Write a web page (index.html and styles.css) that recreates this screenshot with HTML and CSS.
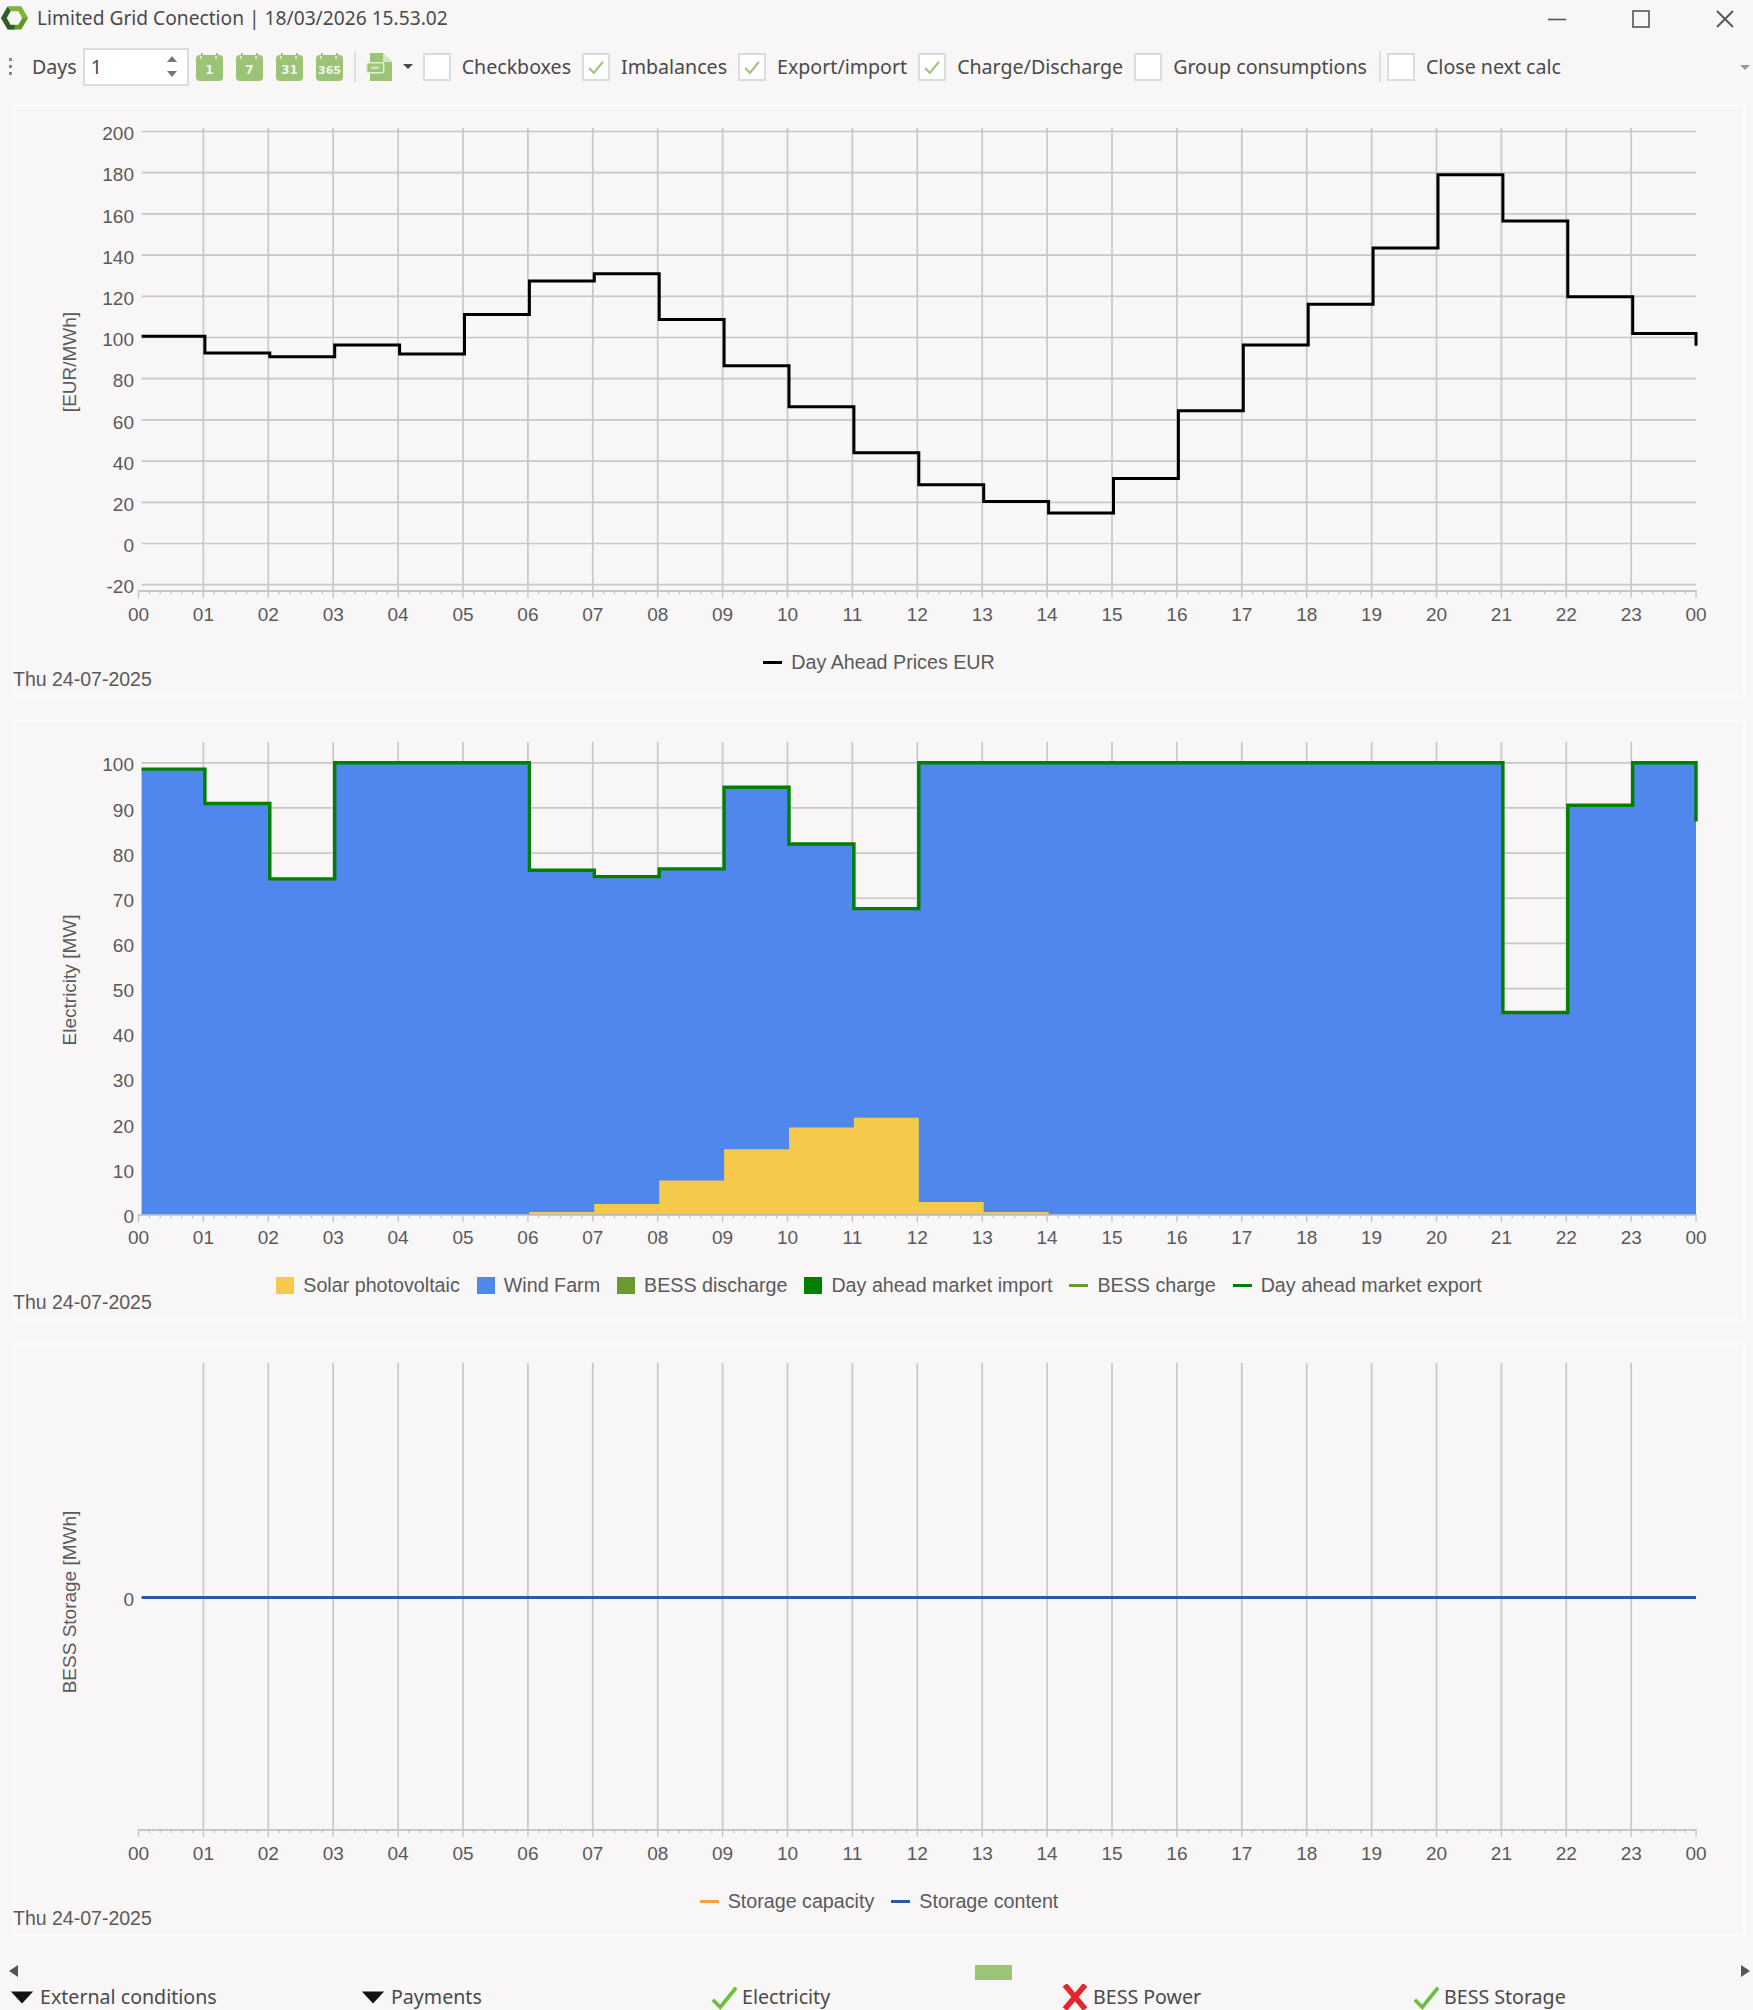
FILE: index.html
```html
<!DOCTYPE html>
<html lang="en">

<head>
    <meta charset="UTF-8">
    <meta name="viewport" content="width=device-width, initial-scale=1.0">
    <title>Limited Grid Conection</title>
    <link rel="stylesheet" href="styles.css">
</head>

<body>
    <div class="titlebar">
        <svg class="logo" viewBox="0 0 28 26">
            <polygon points="7,1 21,1 28,13 21,25 7,25 0,13" fill="#5c9a2e"/>
            <polygon points="7,1 0,13 7,25 14,25 14,20 10,20 6,13 10,6" fill="#2f5f24"/>
            <polygon points="7,1 21,1 28,13 22,13 18,6 10,6" fill="#7fb836"/>
            <polygon points="10,6 18,6 22,13 18,20 10,20 6,13" fill="#f8f6f7"/>
        </svg>
        <span class="title">Limited Grid Conection | 18/03/2026 15.53.02</span>
        <div class="window-buttons">
            <svg class="win-btn" viewBox="0 0 18 18"><path d="M0 9.5H18" stroke="#555" stroke-width="1.6"/></svg>
            <svg class="win-btn" viewBox="0 0 18 18"><rect x="1" y="1" width="16" height="16" fill="none" stroke="#555" stroke-width="1.6"/></svg>
            <svg class="win-btn" viewBox="0 0 18 18"><path d="M1 1L17 17M17 1L1 17" stroke="#555" stroke-width="1.8"/></svg>
        </div>
    </div>

    <div class="toolbar">
        <div class="grip"><i></i><i></i><i></i></div>
        <span class="days-label">Days</span>
        <div class="spinner">
            <span>1</span>
            <div class="spin-arrows"><i class="arrow-up"></i><i class="arrow-down"></i></div>
        </div>
        <div class="calendars">
            <svg class="cal" viewBox="0 0 27 28"><path d="M6 3V0M21 3V0" stroke="#9cc476" stroke-width="2"/><rect y="2" width="27" height="26" rx="4" fill="#9cc476"/><path d="M5 3V6M20 3V6" stroke="#d5e6c3" stroke-width="2"/><text x="13.5" y="21" class="cal-num">1</text></svg>
            <svg class="cal" viewBox="0 0 27 28"><path d="M6 3V0M21 3V0" stroke="#9cc476" stroke-width="2"/><rect y="2" width="27" height="26" rx="4" fill="#9cc476"/><path d="M5 3V6M20 3V6" stroke="#d5e6c3" stroke-width="2"/><text x="13.5" y="21" class="cal-num">7</text></svg>
            <svg class="cal" viewBox="0 0 27 28"><path d="M6 3V0M21 3V0" stroke="#9cc476" stroke-width="2"/><rect y="2" width="27" height="26" rx="4" fill="#9cc476"/><path d="M5 3V6M20 3V6" stroke="#d5e6c3" stroke-width="2"/><text x="13.5" y="21" class="cal-num">31</text></svg>
            <svg class="cal" viewBox="0 0 27 28"><path d="M6 3V0M21 3V0" stroke="#9cc476" stroke-width="2"/><rect y="2" width="27" height="26" rx="4" fill="#9cc476"/><path d="M5 3V6M20 3V6" stroke="#d5e6c3" stroke-width="2"/><text x="13.5" y="21" class="cal-num cal-small">365</text></svg>
        </div>
        <div class="sep sep-first"></div>
        <svg class="doc" viewBox="0 0 26 28"><path d="M4 0H17L26 9V28H4Z" fill="#9cc476"/><path d="M17 0V9H26Z" fill="#d5e6c3"/><rect x="0.7" y="9.7" width="17" height="10" rx="2" fill="#9cc476" stroke="#e3eed8" stroke-width="1.4"/><rect x="5" y="13.5" width="8" height="2.5" fill="#cfe2bb"/></svg>
        <i class="caret"></i>
        <label class="check"><span class="box"></span>Checkboxes</label>
        <label class="check"><span class="box"><svg viewBox="0 0 28 28"><path d="M6 15L11.5 21L22 8" class="tick"/></svg></span>Imbalances</label>
        <label class="check"><span class="box"><svg viewBox="0 0 28 28"><path d="M6 15L11.5 21L22 8" class="tick"/></svg></span>Export/import</label>
        <label class="check"><span class="box"><svg viewBox="0 0 28 28"><path d="M6 15L11.5 21L22 8" class="tick"/></svg></span>Charge/Discharge</label>
        <label class="check"><span class="box"></span>Group consumptions</label>
        <div class="sep sep-last"></div>
        <label class="check"><span class="box"></span>Close next calc</label>
        <i class="caret caret-end"></i>
    </div>

    <div class="panel panel-prices">
        <div class="chart" id="chart-prices"></div>
        <div class="legend">
            <span class="legend-item"><i class="line line-black"></i>Day Ahead Prices EUR</span>
        </div>
        <div class="chart-date">Thu 24-07-2025</div>
    </div>

    <div class="panel panel-electricity">
        <div class="chart" id="chart-electricity"></div>
        <div class="legend">
            <span class="legend-item"><i class="swatch solar"></i>Solar photovoltaic</span>
            <span class="legend-item"><i class="swatch wind"></i>Wind Farm</span>
            <span class="legend-item"><i class="swatch bess"></i>BESS discharge</span>
            <span class="legend-item"><i class="swatch market"></i>Day ahead market import</span>
            <span class="legend-item"><i class="line line-bess"></i>BESS charge</span>
            <span class="legend-item"><i class="line line-market"></i>Day ahead market export</span>
        </div>
        <div class="chart-date">Thu 24-07-2025</div>
    </div>

    <div class="panel panel-storage">
        <div class="chart" id="chart-storage"></div>
        <div class="legend">
            <span class="legend-item"><i class="line line-orange"></i>Storage capacity</span>
            <span class="legend-item"><i class="line line-blue"></i>Storage content</span>
        </div>
        <div class="chart-date">Thu 24-07-2025</div>
    </div>

    <div class="scrollbar">
        <i class="scroll-left"></i>
        <i class="scroll-thumb"></i>
        <i class="scroll-right"></i>
    </div>

    <div class="tabs">
        <div class="tab"><svg class="tab-icon" viewBox="0 0 28 28"><path d="M2 8H26L14 21Z" fill="#111"/></svg>External conditions</div>
        <div class="tab"><svg class="tab-icon" viewBox="0 0 28 28"><path d="M2 8H26L14 21Z" fill="#111"/></svg>Payments</div>
        <div class="tab"><svg class="tab-icon" viewBox="0 0 28 28"><path d="M2 17L10 25L27 4" fill="none" stroke="#6cbf3f" stroke-width="4"/></svg>Electricity</div>
        <div class="tab"><svg class="tab-icon" viewBox="0 0 28 28"><path d="M3 1L25 27M25 1L3 27" stroke="#e3262c" stroke-width="6"/></svg>BESS Power</div>
        <div class="tab"><svg class="tab-icon" viewBox="0 0 28 28"><path d="M2 17L10 25L27 4" fill="none" stroke="#6cbf3f" stroke-width="4"/></svg>BESS Storage</div>
    </div>

    <script src="charts.js"></script>
</body>

</html>
```

FILE: styles.css
```css
body {
    font-family: 'Noto Sans', sans-serif;
    background-color: #f8f6f7;
    color: #4a4a4a;
    margin: 0;
    padding: 0;
    height: 2010px;
    overflow: hidden;
}

.titlebar {
    display: flex;
    align-items: center;
    height: 36px;
    padding-left: 1px;
}

.logo {
    width: 27px;
    height: 26px;
}

.title {
    margin-left: 9px;
    margin-top: -2px;
    font-size: 19.2px;
}

.window-buttons {
    display: flex;
    margin-left: auto;
    margin-right: 19px;
    margin-top: 2px;
    gap: 66px;
}

.win-btn {
    width: 18px;
    height: 18px;
}

.toolbar {
    display: flex;
    align-items: center;
    gap: 11px;
    height: 61px;
    padding-left: 9px;
    font-size: 19.6px;
}

.grip {
    display: flex;
    flex-direction: column;
    gap: 4px;
    margin-right: 9px;
}

.grip i {
    display: block;
    width: 3px;
    height: 3px;
    background-color: #888;
}

.days-label {
    margin-right: -5px;
}

.spinner {
    display: flex;
    align-items: center;
    justify-content: space-between;
    box-sizing: border-box;
    width: 106px;
    height: 38px;
    margin-right: -4px;
    padding: 0 10px 0 6px;
    background-color: #fff;
    border: 2px solid #dcdcdc;
}

.spin-arrows {
    display: flex;
    flex-direction: column;
    gap: 9px;
}

.arrow-up,
.arrow-down {
    display: block;
    width: 0;
    height: 0;
    border-left: 5px solid transparent;
    border-right: 5px solid transparent;
}

.arrow-up {
    border-bottom: 6px solid #777;
}

.arrow-down {
    border-top: 6px solid #777;
}

.calendars {
    display: flex;
    gap: 13px;
}

.cal {
    width: 27px;
    height: 28px;
}

.cal-num {
    font-family: 'DejaVu Sans', sans-serif;
    font-size: 12px;
    font-weight: bold;
    fill: #eef5e6;
    text-anchor: middle;
}

.cal-small {
    font-size: 11px;
}

.sep {
    width: 2px;
    height: 31px;
    background-color: #dedede;
}

.sep-first {
    margin-right: -1px;
}

.sep-last {
    margin-left: 1px;
    margin-right: -5px;
}

.doc {
    width: 26px;
    height: 28px;
}

.caret {
    display: block;
    width: 0;
    height: 0;
    margin-right: -1px;
    border-left: 5px solid transparent;
    border-right: 5px solid transparent;
    border-top: 5px solid #444;
}

.caret-end {
    position: absolute;
    top: 65px;
    left: 1740px;
    border-top-color: #999;
}

.check {
    display: flex;
    align-items: center;
    gap: 11px;
}

.box {
    display: block;
    box-sizing: border-box;
    width: 28px;
    height: 28px;
    background-color: #fff;
    border: 2px solid #dcdcdc;
}

.box svg {
    display: block;
    width: 24px;
    height: 24px;
}

.tick {
    fill: none;
    stroke: #9cc476;
    stroke-width: 2.4;
}

.panel {
    box-sizing: border-box;
    width: 1732px;
    margin-left: 13px;
    border: 2px solid #fdfcfd;
    font-family: 'Liberation Sans', Arial, sans-serif;
    font-size: 19.7px;
    color: #5a5a5a;
}

.panel-prices {
    height: 592px;
    margin-top: 8px;
}

.panel-electricity {
    height: 601px;
    margin-top: 23px;
}

.panel-storage {
    height: 593px;
    margin-top: 22px;
}

.chart svg {
    display: block;
    overflow: hidden;
}

.chart text {
    font-family: 'Liberation Sans', Arial, sans-serif;
    font-size: 19px;
    fill: #5a5a5a;
}

.legend {
    display: flex;
    justify-content: center;
    gap: 17px;
    height: 20px;
    line-height: 20px;
}

.legend-item {
    display: flex;
    align-items: center;
    gap: 9px;
}

.swatch {
    display: block;
    width: 18px;
    height: 17px;
}

.solar { background-color: #f5c94c; }
.wind { background-color: #5087ec; }
.bess { background-color: #6a9b33; }
.market { background-color: #008000; }

.line {
    display: block;
    width: 19px;
    height: 3px;
}

.line-black { background-color: #000; }
.line-bess { background-color: #6a9b33; }
.line-market { background-color: #008000; }
.line-orange { background-color: #f5a13c; }
.line-blue { background-color: #2f57a8; }

.chart-date {
    margin-top: -4px;
    margin-left: -2px;
    font-size: 19.5px;
    line-height: 22px;
}

.scrollbar {
    position: relative;
    height: 44px;
}

.scrollbar i {
    position: absolute;
    display: block;
}

.scroll-left {
    top: 29px;
    left: 9px;
    border-top: 6px solid transparent;
    border-bottom: 6px solid transparent;
    border-right: 9px solid #555;
}

.scroll-right {
    top: 29px;
    left: 1741px;
    border-top: 6px solid transparent;
    border-bottom: 6px solid transparent;
    border-left: 9px solid #555;
}

.scroll-thumb {
    top: 29px;
    left: 975px;
    width: 37px;
    height: 15px;
    background-color: #9cc476;
}

.tabs {
    display: grid;
    grid-template-columns: repeat(5, 351px);
    padding-left: 9px;
    font-size: 19.6px;
    line-height: 26px;
    margin-top: 4px;
}

.tab {
    display: flex;
    align-items: center;
    gap: 5px;
}

.tab-icon {
    width: 26px;
    height: 26px;
}
```

FILE: charts.js
```js
const X0 = 138.5;
const HOUR = 64.9;
const PLOT_LEFT = 141.6;
const PLOT_RIGHT = 1696;
const LEFT = 15;
const WIDTH = 1728;

const prices = [100.6, 92.5, 90.7, 96.3, 92, 111.2, 127.4, 131, 108.7, 86.3, 66.4, 44, 28.5, 20.4, 14.8, 31.6, 64.5, 96.3, 116.2, 143.5, 179, 156.5, 119.8, 102];
const exportLine = [98.6, 91, 74.3, 100, 100, 100, 76.2, 74.8, 76.5, 94.6, 82, 67.7, 100, 100, 100, 100, 100, 100, 100, 100, 100, 44.7, 90.6, 100];
const solar = [0, 0, 0, 0, 0, 0, 0.5, 2.3, 7.5, 14.4, 19.2, 21.4, 2.7, 0.5, 0, 0, 0, 0, 0, 0, 0, 0, 0, 0];

function hourX(h) {
    return h === 0 ? PLOT_LEFT : h === 24 ? PLOT_RIGHT : X0 + h * HOUR + 1.5;
}

// builds a stepped path, one level per hour
function stepPath(values, toY) {
    let d = `M${PLOT_LEFT} ${toY(values[0])}`;
    values.forEach((v, h) => {
        d += `V${toY(v)}H${hourX(h + 1)}`;
    });
    return d;
}

function xAxis(top, axisY) {
    let s = '';
    for (let h = 1; h < 24; h++) {
        const x = X0 + h * HOUR;
        s += `<line x1="${x}" x2="${x}" y1="${top}" y2="${axisY}" class="grid"/>`;
    }
    s += `<line x1="${X0}" x2="${PLOT_RIGHT}" y1="${axisY + 1}" y2="${axisY + 1}" class="axis-line"/>`;
    for (let m = 0; m <= 24 * 6; m++) {
        const x = X0 + m * HOUR / 6;
        const len = m % 6 === 0 ? 8 : 4;
        s += `<line x1="${x}" x2="${x}" y1="${axisY}" y2="${axisY + len}" class="axis"/>`;
    }
    return s;
}

function xLabels(y) {
    let s = '';
    for (let h = 0; h <= 24; h++) {
        const label = String(h % 24).padStart(2, '0');
        s += `<text x="${X0 + h * HOUR}" y="${y}" text-anchor="middle">${label}</text>`;
    }
    return s;
}

function yLabel(value, y) {
    return `<text x="134" y="${y + 8.6}" text-anchor="end">${value}</text>`;
}

function yTitle(title, y) {
    return `<text transform="translate(76 ${y}) rotate(-90)" text-anchor="middle">${title}</text>`;
}

function hLine(y) {
    return `<line x1="${PLOT_LEFT}" x2="${PLOT_RIGHT}" y1="${y}" y2="${y}" class="grid"/>`;
}

function render(id, top, height, body) {
    document.getElementById(id).innerHTML =
        `<svg width="${WIDTH}" height="${height}" viewBox="${LEFT} ${top} ${WIDTH} ${height}">
            <style>.grid{stroke:#c8c8c8;stroke-width:1.7}.axis{stroke:#c4c4c4;stroke-width:1.3}.axis-line{stroke:#c8c8c8;stroke-width:1.8}</style>
            ${body}
        </svg>`;
}

function drawPrices() {
    const toY = v => 543.5 - v * 2.06;
    let s = xAxis(128, 590);
    for (let v = -20; v <= 200; v += 20) {
        s += hLine(toY(v));
        s += yLabel(v, toY(v));
    }
    s += xLabels(621);
    s += yTitle('[EUR/MWh]', 362);
    s += `<path d="${stepPath(prices, toY)}V${toY(96)}" fill="none" stroke="#000" stroke-width="3"/>`;
    render('chart-prices', 107, 545, s);
}

function drawElectricity() {
    const toY = v => 1214.3 - v * 4.515;
    let s = xAxis(742, 1214);
    for (let v = 0; v <= 100; v += 10) {
        s += hLine(toY(v));
        s += yLabel(v, toY(v));
    }
    s += xLabels(1243.5);
    s += yTitle('Electricity [MW]', 980);
    const line = stepPath(exportLine, toY);
    s += `<path d="${line}V${toY(87)}V1214.3H${PLOT_LEFT}Z" fill="#5087ec"/>`;
    s += `<path d="${stepPath(solar, toY)}V1214.3H${PLOT_LEFT}Z" fill="#f5c94c"/>`;
    s += `<path d="${line}V${toY(87)}" fill="none" stroke="#008000" stroke-width="3.4"/>`;
    render('chart-electricity', 722, 553, s);
}

function drawStorage() {
    let s = xAxis(1363, 1829);
    s += xLabels(1860);
    s += yLabel(0, 1597.5);
    s += yTitle('BESS Storage [MWh]', 1602);
    s += `<line x1="${PLOT_LEFT}" x2="${PLOT_RIGHT}" y1="1597.5" y2="1597.5" stroke="#2f57a8" stroke-width="3.2"/>`;
    render('chart-storage', 1345, 546, s);
}

drawPrices();
drawElectricity();
drawStorage();
```
